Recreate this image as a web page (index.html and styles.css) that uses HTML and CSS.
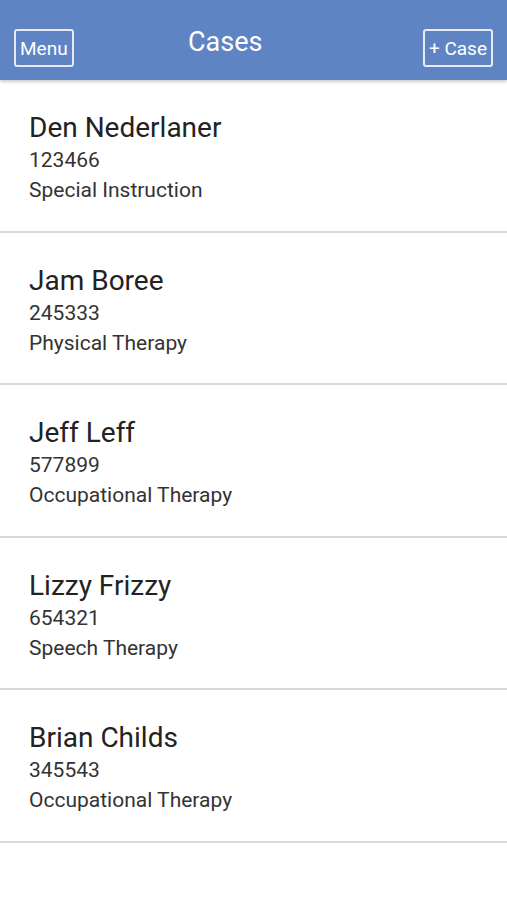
FILE: index.html
```html
<!DOCTYPE html>
<html lang="en">
<head>
    <meta charset="UTF-8">
    <meta name="viewport" content="width=device-width, initial-scale=1.0">
    <title>Cases</title>
    <link rel="stylesheet" href="styles.css">
</head>
<body>
    <div class="header">
        <button class="header-btn">Menu</button>
        <div class="title">Cases</div>
        <button class="header-btn">+ Case</button>
    </div>

    <div class="case-list">
        <div class="case">
            <div class="case-name">Den Nederlaner</div>
            <div class="case-id">123466</div>
            <div class="case-type">Special Instruction</div>
        </div>
        <div class="case">
            <div class="case-name">Jam Boree</div>
            <div class="case-id">245333</div>
            <div class="case-type">Physical Therapy</div>
        </div>
        <div class="case">
            <div class="case-name">Jeff Leff</div>
            <div class="case-id">577899</div>
            <div class="case-type">Occupational Therapy</div>
        </div>
        <div class="case">
            <div class="case-name">Lizzy Frizzy</div>
            <div class="case-id">654321</div>
            <div class="case-type">Speech Therapy</div>
        </div>
        <div class="case">
            <div class="case-name">Brian Childs</div>
            <div class="case-id">345543</div>
            <div class="case-type">Occupational Therapy</div>
        </div>
    </div>
</body>
</html>
```

FILE: styles.css
```css
body {
    margin: 0;
    font-family: Roboto, "Liberation Sans", sans-serif;
    background: #fff;
    color: #222;
}

.header {
    height: 80px;
    box-sizing: border-box;
    padding: 16px 14px 0;
    display: flex;
    align-items: center;
    justify-content: space-between;
    background: #5f84c4;
    box-shadow: 0 2px 3px rgba(0, 0, 0, 0.2);
    position: relative;
}

.title {
    color: #fff;
    font-size: 27px;
    margin: -12px 46px 0 0;
}

.header-btn {
    font-family: inherit;
    font-size: 19px;
    color: #fff;
    background: transparent;
    border: 2px solid #e6ecf7;
    border-radius: 3px;
    height: 38px;
    padding: 0 4px;
    cursor: pointer;
}

.case {
    padding: 31px 29px 0;
    height: 152.5px;
    box-sizing: border-box;
    border-bottom: 2px solid #d9d9d9;
}

.case-name {
    font-size: 28px;
    line-height: 34px;
    color: #222;
}

.case-id,
.case-type {
    font-size: 21px;
    line-height: 30px;
    color: #333;
}
```
